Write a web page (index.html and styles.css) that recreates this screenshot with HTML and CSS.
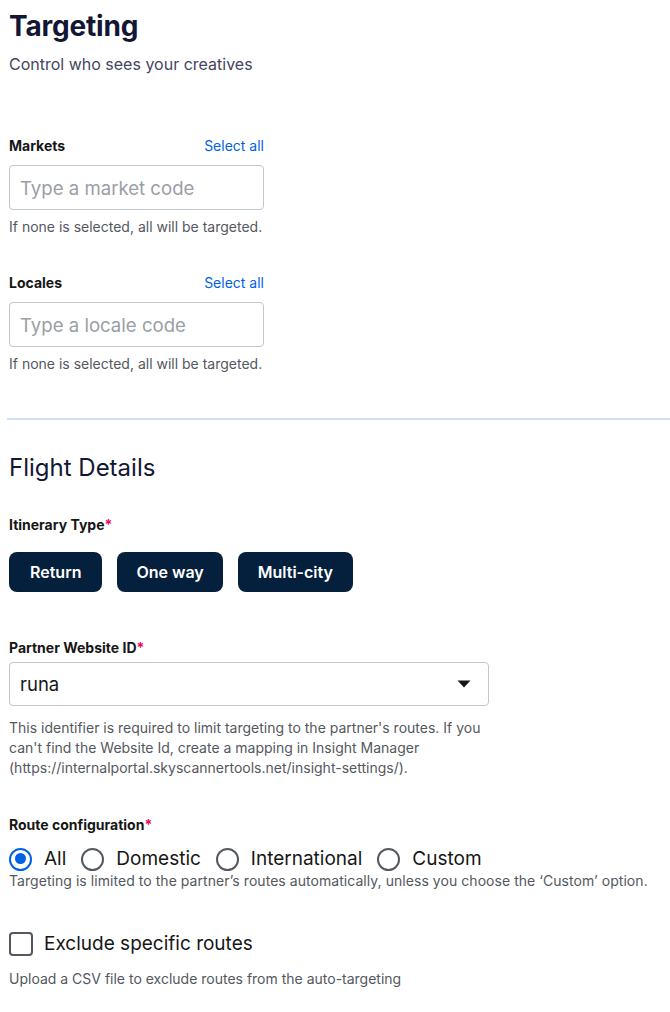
FILE: index.html
```html
<!DOCTYPE html>
<html>
<head>
<meta charset="utf-8">
<link rel="stylesheet" href="styles.css">
</head>
<body>
<div class="page">
  <h1 class="title">Targeting</h1>
  <p class="subtitle">Control who sees your creatives</p>

  <div class="field first">
    <div class="label-row"><span class="label">Markets</span><a class="link">Select all</a></div>
    <div class="input"><span class="placeholder">Type a market code</span></div>
    <p class="help">If none is selected, all will be targeted.</p>
  </div>

  <div class="field second">
    <div class="label-row"><span class="label">Locales</span><a class="link">Select all</a></div>
    <div class="input"><span class="placeholder">Type a locale code</span></div>
    <p class="help">If none is selected, all will be targeted.</p>
  </div>

  <hr class="divider">

  <h2 class="section">Flight Details</h2>

  <div class="group itin">
    <div class="label">Itinerary Type<span class="req">*</span></div>
    <div class="chips">
      <button class="chip">Return</button>
      <button class="chip">One way</button>
      <button class="chip">Multi-city</button>
    </div>
  </div>

  <div class="group partner">
    <div class="label">Partner Website ID<span class="req">*</span></div>
    <div class="select">
      <span class="value">runa</span>
      <svg class="caret" width="14" height="8" viewBox="0 0 14 8"><path d="M0.5 0.5h13L7 7.5z" fill="#161616"/></svg>
    </div>
    <p class="help wide">This identifier is required to limit targeting to the partner's routes. If you can't find the Website Id, create a mapping in Insight Manager (https://internalportal.skyscannertools.net/insight-settings/).</p>
  </div>

  <div class="group route">
    <div class="label">Route configuration<span class="req">*</span></div>
    <div class="radios">
      <label class="radio"><span class="dot on"></span>All</label>
      <label class="radio"><span class="dot"></span>Domestic</label>
      <label class="radio"><span class="dot"></span>International</label>
      <label class="radio"><span class="dot"></span>Custom</label>
    </div>
    <p class="help tight">Targeting is limited to the partner’s routes automatically, unless you choose the ‘Custom’ option.</p>
  </div>

  <div class="group exclude">
    <label class="check"><span class="box"></span>Exclude specific routes</label>
    <p class="help">Upload a CSV file to exclude routes from the auto-targeting</p>
  </div>
</div>
</body>
</html>
```

FILE: styles.css
```css
* { box-sizing: border-box; }
html, body { margin: 0; padding: 0; background: #fff; }
body {
  font-family: Inter, "Noto Sans", "Liberation Sans", sans-serif;
  color: #161616;
}
.page { padding: 0 0 0 9px; }
.title {
  margin: 0;
  padding-top: 6px;
  font-size: 28px;
  line-height: 40px;
  font-weight: 700;
  color: #131634;
  letter-spacing: -0.2px;
}
.subtitle {
  margin: 6px 0 0;
  font-size: 16px;
  line-height: 24px;
  color: #444560;
}
.field { width: 255px; }
.field.first { margin-top: 60px; }
.field.second { margin-top: 36px; }
.label-row { display: flex; justify-content: space-between; align-items: baseline; }
.label {
  font-size: 14px;
  line-height: 20px;
  font-weight: 700;
  color: #161616;
}
.link { font-size: 14px; line-height: 20px; color: #0062e3; }
.req { color: #e70866; }
.input {
  margin-top: 9px;
  height: 45px;
  border: 1px solid #c1c7cf;
  border-radius: 4px;
  padding: 0 10px;
  display: flex;
  align-items: center;
}
.placeholder { font-size: 18.6px; color: #9a9ea6; }
.help {
  margin: 7px 0 0;
  font-size: 14px;
  line-height: 20px;
  color: #545860;
}
.divider {
  margin: 44px 0 0 -2px;
  border: 0;
  border-top: 2px solid #cfe0f8;
  height: 0;
}
.section {
  margin: 32px 0 0;
  font-size: 24px;
  line-height: 32px;
  font-weight: 400;
  color: #131634;
}
.itin { margin-top: 31px; }
.chips { display: flex; gap: 15px; margin-top: 17px; }
.chip {
  height: 40px;
  border: 0;
  border-radius: 8px;
  background: #05203c;
  color: #fff;
  font-family: inherit;
  font-size: 16px;
  font-weight: 600;
  padding: 0 20px;
}
.chip:first-child { padding: 0 21px; }
.chip:nth-child(2) { padding: 0 19px; }
.partner { margin-top: 46px; }
.select {
  margin-top: 4px;
  width: 480px;
  height: 44px;
  border: 1px solid #c1c7cf;
  border-radius: 4px;
  padding: 0 17px 0 10px;
  display: flex;
  align-items: center;
  justify-content: space-between;
}
.value { font-size: 18.5px; color: #161616; }
.help.wide { width: 490px; margin-top: 12px; }
.route { margin-top: 37px; }
.radios { display: flex; gap: 15px; margin-top: 11px; align-items: center; }
.radio {
  display: flex;
  align-items: center;
  gap: 12px;
  font-size: 19px;
  line-height: 26px;
  color: #161616;
}
.dot {
  width: 23px;
  height: 23px;
  border: 2.5px solid #545860;
  border-radius: 50%;
  display: inline-block;
  position: relative;
}
.dot.on { border-color: #0062e3; }
.dot.on::after {
  content: "";
  position: absolute;
  left: 3.5px; top: 3.5px;
  width: 11px; height: 11px;
  border-radius: 50%;
  background: #0062e3;
}
.help.tight { margin-top: -1px; letter-spacing: 0.05px; }
.exclude { margin-top: 40px; }
.check {
  display: flex;
  align-items: center;
  gap: 11px;
  font-size: 19px;
  line-height: 26px;
  color: #161616;
}
.box {
  width: 24px;
  height: 24px;
  border: 2.5px solid #545860;
  border-radius: 4px;
  display: inline-block;
}
.exclude .help { margin-top: 12px; }
```
